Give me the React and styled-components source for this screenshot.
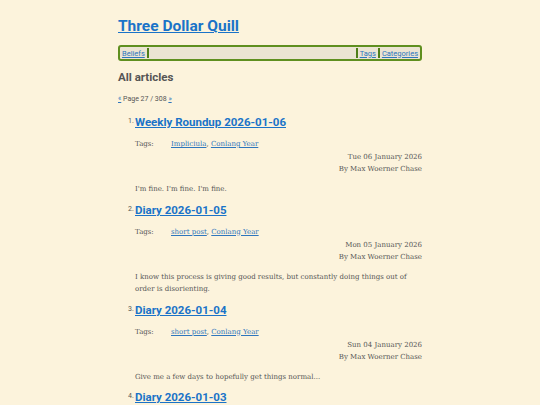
import React from "react";
import styled, { createGlobalStyle } from "styled-components";

const Global = createGlobalStyle`
  html, body { margin: 0; padding: 0; background: #fcf3dc; }
  body { font-family: "DejaVu Serif", serif; color: #555; }
`;

const sans = `Roboto, "Open Sans", sans-serif`;

const Page = styled.div`
  width: 304px;
  margin: 0 auto;
  padding-top: 16px;
`;

const SiteTitle = styled.h1`
  font-family: ${sans};
  font-size: 15.5px;
  font-weight: 700;
  margin: 0 0 9px;
  line-height: 20px;
  a { color: #1a73c8; text-decoration: underline; }
`;

const Nav = styled.nav`
  display: flex;
  align-items: center;
  border: 2px solid #5f8f1f;
  border-radius: 3px;
  background: #ebe4d2;
  height: 12px;
  padding: 0 1px;
  font-family: ${sans};
  font-size: 7.5px;
`;

const NavLink = styled.a`
  color: #2e76bd;
  text-decoration: underline;
  padding: 0 1px;
`;

const Sep = styled.span`
  width: 2px;
  height: 10px;
  background: #4f7f18;
  margin: 0 1px;
`;

const Spacer = styled.div`
  flex: 1;
`;

const Heading = styled.h2`
  font-family: ${sans};
  font-size: 11.5px;
  font-weight: 700;
  color: #555;
  margin: 8px 0 0;
  line-height: 16px;
`;

const Pager = styled.p`
  font-family: ${sans};
  font-size: 7px;
  margin: 9px 0 0;
  line-height: 10px;
  a { color: #2e76bd; }
`;

const List = styled.ol`
  margin: 10px 0 0;
  padding-left: 17px;
  list-style: none;
  counter-reset: item;
`;

const Item = styled.li`
  counter-increment: item;
  margin-bottom: 6px;
`;

const ItemTitle = styled.h3`
  font-family: ${sans};
  font-size: 11.5px;
  font-weight: 700;
  margin: 0;
  line-height: 16px;
  position: relative;
  &::before {
    content: counter(item) ".";
    position: absolute;
    left: -7px;
    bottom: 1px;
    font-size: 7px;
    font-weight: 400;
    color: #555;
  }
  a { color: #1a73c8; text-decoration: underline; }
`;

const Tags = styled.div`
  display: flex;
  font-size: 7px;
  margin-top: 9px;
  line-height: 11px;
`;

const TagLabel = styled.span`
  width: 36px;
`;

const TagLink = styled.a`
  color: #2e76bd;
  text-decoration: underline;
`;

const Meta = styled.div`
  text-align: right;
  font-size: 7px;
  line-height: 12px;
  margin-top: 1px;
`;

const Excerpt = styled.p`
  font-size: 7px;
  line-height: 12.5px;
  margin: 8px 0 0;
  padding-right: 14px;
`;

const articles = [
  { title: "Weekly Roundup 2026-01-06", tags: ["Impliciula", "Conlang Year"], date: "Tue 06 January 2026", text: "I'm fine. I'm fine. I'm fine." },
  { title: "Diary 2026-01-05", tags: ["short post", "Conlang Year"], date: "Mon 05 January 2026", text: "I know this process is giving good results, but constantly doing things out of order is disorienting." },
  { title: "Diary 2026-01-04", tags: ["short post", "Conlang Year"], date: "Sun 04 January 2026", text: "Give me a few days to hopefully get things normal..." },
  { title: "Diary 2026-01-03", tags: ["short post", "Conlang Year"], date: "Sat 03 January 2026", text: "" },
];

export default function App() {
  return (
    <>
      <Global />
      <Page>
        <SiteTitle><a href="#">Three Dollar Quill</a></SiteTitle>
        <Nav>
          <NavLink href="#">Beliefs</NavLink>
          <Sep />
          <Spacer />
          <Sep />
          <NavLink href="#">Tags</NavLink>
          <Sep />
          <NavLink href="#">Categories</NavLink>
        </Nav>
        <Heading>All articles</Heading>
        <Pager><a href="#">«</a> Page 27 / 308 <a href="#">»</a></Pager>
        <List>
          {articles.map((a) => (
            <Item key={a.title}>
              <ItemTitle><a href="#">{a.title}</a></ItemTitle>
              <Tags>
                <TagLabel>Tags:</TagLabel>
                <span>
                  {a.tags.map((t, i) => (
                    <React.Fragment key={t}>
                      <TagLink href="#">{t}</TagLink>{i < a.tags.length - 1 ? ", " : ""}
                    </React.Fragment>
                  ))}
                </span>
              </Tags>
              <Meta>{a.date}<br />By Max Woerner Chase</Meta>
              <Excerpt>{a.text}</Excerpt>
            </Item>
          ))}
        </List>
      </Page>
    </>
  );
}
